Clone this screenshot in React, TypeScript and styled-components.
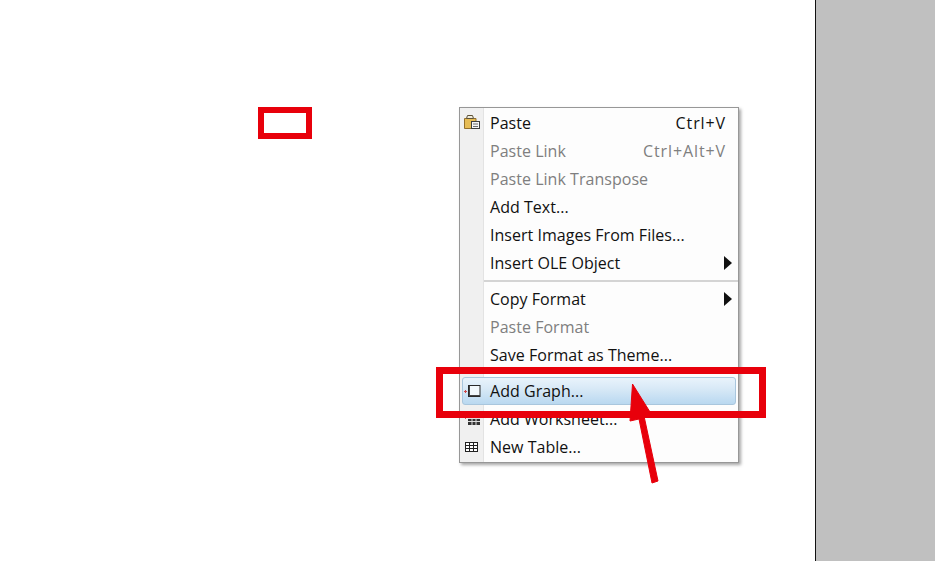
import React from "react";
import styled, { createGlobalStyle } from "styled-components";

const GlobalStyle = createGlobalStyle`
  html, body {
    margin: 0;
    padding: 0;
    background: #fff;
  }
`;

const Page = styled.div`
  position: relative;
  width: 935px;
  height: 561px;
  display: flex;
  overflow: hidden;
  font-family: "Open Sans", "Noto Sans", "Liberation Sans", sans-serif;
`;

const Sheet = styled.div`
  flex: 1;
  background: #fff;
`;

const SidePanel = styled.div`
  width: 119px;
  background: #c0c0c0;
  border-left: 1px solid #111;
`;

const Menu = styled.div`
  position: absolute;
  left: 459px;
  top: 107px;
  width: 278px;
  padding: 1px 0;
  border: 1px solid #979797;
  background: linear-gradient(to right, #f0f0f0 0, #f0f0f0 23px, #e3e3e3 23px, #e3e3e3 24px, #fdfdfd 24px);
  box-shadow: 2px 2px 3px rgba(0, 0, 0, 0.35);
`;

const Row = styled.div<{ $hot?: boolean; $off?: boolean }>`
  position: relative;
  height: 28px;
  display: flex;
  align-items: center;
  box-sizing: border-box;
  padding: 0 12px 0 30px;
  font-size: 16px;
  letter-spacing: 0.03px;
  color: ${(p) => (p.$off ? "#7f7f7f" : "#111")};
  ${(p) =>
    p.$hot &&
    `
    margin: 0 2px;
    padding: 0 10px 0 27px;
    border: 1px solid #a9c6dd;
    border-radius: 3px;
    background: linear-gradient(to bottom, #e9f3fb 0%, #d6e8f6 45%, #b9d8f0 100%);
  `}
`;

const Label = styled.span`
  flex: 1;
  white-space: nowrap;
`;

const Shortcut = styled.span`
  white-space: nowrap;
  letter-spacing: 0.9px;
`;

const Caret = styled.span`
  width: 0;
  height: 0;
  margin-right: -6px;
  border-style: solid;
  border-width: 7px 0 7px 8px;
  border-color: transparent transparent transparent #111;
`;

const IconSlot = styled.span<{ $hot?: boolean }>`
  position: absolute;
  left: ${(p) => (p.$hot ? "1px" : "3px")};
  top: ${(p) => (p.$hot ? "5px" : "6px")};
  width: 18px;
  height: 16px;
  display: flex;
`;

const Separator = styled.div`
  height: 8px;
  margin-left: 24px;
  display: flex;
  align-items: center;
  &::after {
    content: "";
    flex: 1;
    height: 2px;
    background: #d4d4d4;
  }
`;

const Annotation = styled.div<{ $x: number; $y: number; $w: number; $h: number; $b: number }>`
  position: absolute;
  left: ${(p) => p.$x}px;
  top: ${(p) => p.$y}px;
  width: ${(p) => p.$w}px;
  height: ${(p) => p.$h}px;
  box-sizing: border-box;
  border: ${(p) => p.$b}px solid #e8000b;
`;

const ArrowSvg = styled.svg`
  position: absolute;
  left: 620px;
  top: 375px;
`;

const PasteIcon = () => (
  <svg width="18" height="16" viewBox="0 0 18 16">
    <path d="M1.5 3.5h11.500v10H1.500z" fill="#e6bc55" stroke="#94702c" />
    <path d="M4.500 .5h5l1 3H3.500z" fill="#f1eddc" stroke="#5e5238" />
    <rect x="8.500" y="6.500" width="8" height="7" fill="#f6f6f6" stroke="#3f3f3f" />
    <path d="M10 9h5M10 11.500h5" stroke="#6d6d6d" />
  </svg>
);

const GraphIcon = () => (
  <svg width="18" height="16" viewBox="0 0 18 16">
    <path d="M0 8.500h3M1.500 7v3" stroke="#d04848" />
    <rect x="4.500" y="2.500" width="11.500" height="11" fill="#f2f8fc" stroke="#2a2a2a" />
    <path d="M5.500 3v10M5 12.500h11" stroke="#444" />
  </svg>
);

const WorksheetIcon = () => (
  <svg width="18" height="16" viewBox="0 0 18 16">
    <path d="M1 6.500h3M2.500 5v3" stroke="#d65a5a" />
    <rect x="5" y="4" width="12" height="10" fill="#333" />
    <path d="M5 7.500h12M5 10.500h12M9 4v10M13 4v10" stroke="#ddd" />
  </svg>
);

const TableIcon = () => (
  <svg width="18" height="16" viewBox="0 0 18 16">
    <rect x="2.500" y="3.500" width="12" height="9" fill="#fff" stroke="#222" />
    <path d="M2.500 6.500h12M2.500 9.500h12M6.500 3.500v9M10.500 3.500v9" stroke="#222" />
  </svg>
);

export default function App() {
  return (
    <>
      <GlobalStyle />
      <Page>
        <Sheet />
        <SidePanel />
        <Menu>
          <Row>
            <IconSlot><PasteIcon /></IconSlot>
            <Label>Paste</Label>
            <Shortcut>Ctrl+V</Shortcut>
          </Row>
          <Row $off>
            <Label>Paste Link</Label>
            <Shortcut>Ctrl+Alt+V</Shortcut>
          </Row>
          <Row $off><Label>Paste Link Transpose</Label></Row>
          <Row><Label>Add Text...</Label></Row>
          <Row><Label>Insert Images From Files...</Label></Row>
          <Row>
            <Label>Insert OLE Object</Label>
            <Caret />
          </Row>
          <Separator />
          <Row>
            <Label>Copy Format</Label>
            <Caret />
          </Row>
          <Row $off><Label>Paste Format</Label></Row>
          <Row><Label>Save Format as Theme...</Label></Row>
          <Separator />
          <Row $hot>
            <IconSlot $hot><GraphIcon /></IconSlot>
            <Label>Add Graph...</Label>
          </Row>
          <Row>
            <IconSlot><WorksheetIcon /></IconSlot>
            <Label>Add Worksheet...</Label>
          </Row>
          <Row>
            <IconSlot><TableIcon /></IconSlot>
            <Label>New Table...</Label>
          </Row>
        </Menu>
        <Annotation $x={258} $y={107} $w={54} $h={32} $b={6} />
        <Annotation $x={436} $y={367} $w={330} $h={51} $b={7} />
        <ArrowSvg width="50" height="115" viewBox="620 375 50 115">
          <path d="M632.500 384 L650 412 L644 416 L658 481 L652 483 L639 419 L630 421 Z" fill="#e8000b" stroke="#e8000b" strokeLinejoin="round" />
        </ArrowSvg>
      </Page>
    </>
  );
}
